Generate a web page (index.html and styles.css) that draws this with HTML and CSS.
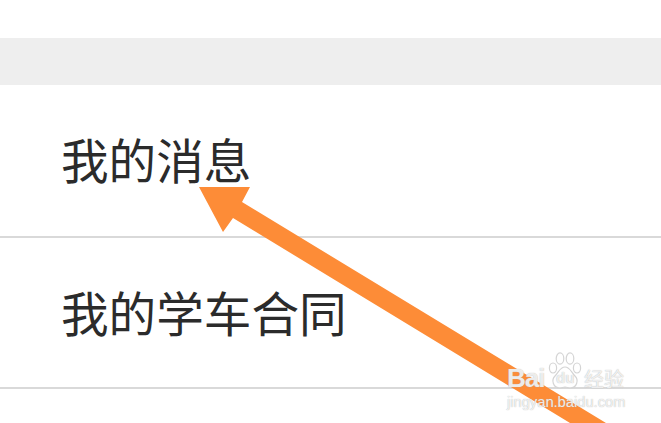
FILE: index.html
```html
<!DOCTYPE html>
<html lang="zh">
<head>
<meta charset="utf-8">
<title>我的</title>
<link rel="stylesheet" href="styles.css">
</head>
<body>
<div class="page">
  <div class="top"></div>
  <div class="band"></div>
  <div class="row">我的消息</div>
  <div class="row">我的学车合同</div>
  <svg class="arrow" viewBox="0 0 661 423" aria-hidden="true">
    <polygon points="199,187 250,187 242,202 606,423 570,423 233,218 223,232" fill="#fd8c37"/>
  </svg>
  <div class="mark">
    <div class="mark-top">
      <span class="bai">Bai</span>
      <span class="paw">
        <svg viewBox="0 0 36 38" aria-hidden="true">
          <g fill="rgba(255,255,255,.55)" stroke="#d4d4d4" stroke-width="1.2">
            <ellipse cx="6" cy="16" rx="3.6" ry="5"/>
            <ellipse cx="13" cy="6.5" rx="3.8" ry="5.6"/>
            <ellipse cx="23" cy="6.5" rx="3.8" ry="5.6"/>
            <ellipse cx="30" cy="16" rx="3.6" ry="5"/>
            <path d="M18 15c-5 0-6 5-10 9-4 4-2 12 5 12 2 0 3-1 5-1s3 1 5 1c7 0 9-8 5-12-4-4-5-9-10-9z"/>
          </g>
        </svg>
        <span class="du">du</span>
      </span>
      <span class="jy">经验</span>
    </div>
    <div class="url">jingyan.baidu.com</div>
  </div>
</div>
</body>
</html>
```
FILE: styles.css
```css
* { box-sizing: border-box; }
html, body { margin: 0; padding: 0; background: #fff; }
.page {
  position: relative;
  width: 661px;
  height: 423px;
  overflow: hidden;
  background: #fff;
}
.top { height: 38px; }
.band { height: 47px; background: #eeeeee; }
.row {
  height: 153px;
  padding: 0 0 4px 61px;
  display: flex;
  align-items: center;
  border-bottom: 2px solid #d9d9d9;
  font-family: "Noto Sans CJK SC", "Liberation Sans", sans-serif;
  font-size: 47.6px;
  line-height: 1;
  color: #2b2b2b;
}
.row + .row { height: 151px; padding-bottom: 2px; }
.arrow {
  position: absolute;
  left: 0;
  top: 0;
  width: 661px;
  height: 423px;
}
.mark {
  position: absolute;
  left: 507px;
  top: 352px;
  width: 122px;
  font-family: "Liberation Sans", sans-serif;
  color: rgba(255, 255, 255, .8);
  text-shadow: 0 0 1px #a8a8a8;
}
.mark-top { display: flex; align-items: flex-end; height: 38px; }
.bai { width: 40px; font-size: 26px; font-weight: 700; letter-spacing: -1px; line-height: 24px; }
.paw { position: relative; width: 36px; height: 38px; flex: none; }
.paw svg { width: 36px; height: 38px; display: block; }
.du {
  position: absolute;
  left: 9px;
  top: 18px;
  font-size: 15px;
  font-weight: 700;
  line-height: 16px;
}
.jy {
  font-family: "Noto Sans CJK SC", sans-serif;
  font-size: 20px;
  line-height: 22px;
  margin-left: 1px;
  white-space: nowrap;
}
.url { font-size: 14.7px; line-height: 18px; margin-top: 3px; white-space: nowrap; }
```
